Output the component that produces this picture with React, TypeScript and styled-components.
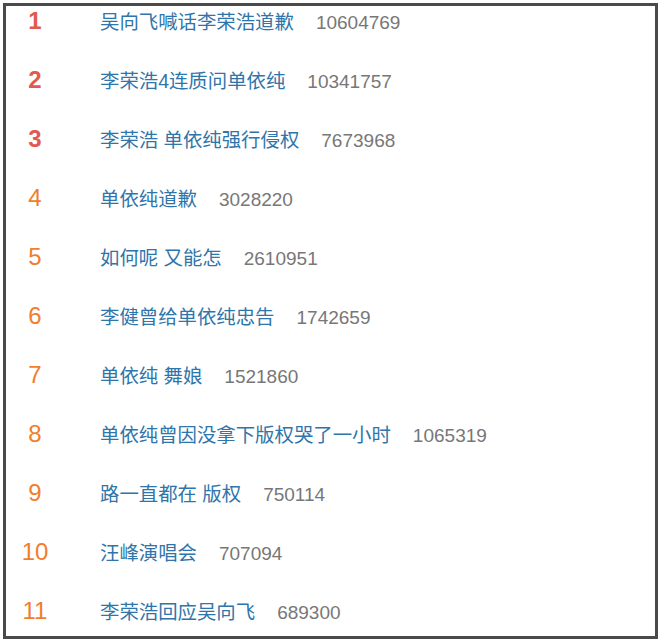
import styled, { createGlobalStyle } from 'styled-components'

const GlobalStyle = createGlobalStyle`
  html, body {
    margin: 0;
    padding: 0;
    background: #fff;
  }
  body {
    font-family: 'Liberation Sans', 'Noto Sans CJK SC', sans-serif;
  }
`

const Frame = styled.div`
  margin: 3px 0 0 3px;
  width: 655px;
  height: 636px;
  box-sizing: border-box;
  border: 3px solid #4a4a4a;
  background: #fff;
  overflow: hidden;
`

const List = styled.ol`
  list-style: none;
  margin: -15px 0 0;
  padding: 0;
`

const Row = styled.li`
  height: 59px;
  display: grid;
  grid-template-columns: 58px 1fr;
  align-content: center;
  align-items: baseline;
`

const Rank = styled.span<{ $top: boolean }>`
  text-align: center;
  font-size: 24px;
  font-weight: ${({ $top }) => ($top ? 700 : 400)};
  color: ${({ $top }) => ($top ? '#e2594f' : '#f07e2c')};
`

const Topic = styled.div`
  display: flex;
  align-items: baseline;
  gap: 22px;
  margin-left: 36px;
`

const Title = styled.span`
  font-size: 19.4px;
  color: #2f75aa;
  white-space: pre;
`

const Count = styled.span`
  font-size: 19px;
  color: #777;
`

type Item = {
  title: string
  count: number
}

const items: Item[] = [
  { title: '吴向飞喊话李荣浩道歉', count: 10604769 },
  { title: '李荣浩4连质问单依纯', count: 10341757 },
  { title: '李荣浩 单依纯强行侵权', count: 7673968 },
  { title: '单依纯道歉', count: 3028220 },
  { title: '如何呢 又能怎', count: 2610951 },
  { title: '李健曾给单依纯忠告', count: 1742659 },
  { title: '单依纯 舞娘', count: 1521860 },
  { title: '单依纯曾因没拿下版权哭了一小时', count: 1065319 },
  { title: '路一直都在 版权', count: 750114 },
  { title: '汪峰演唱会', count: 707094 },
  { title: '李荣浩回应吴向飞', count: 689300 },
]

export default function App() {
  return (
    <>
      <GlobalStyle />
      <Frame>
        <List>
          {items.map((item, i) => (
            <Row key={item.title}>
              <Rank $top={i < 3}>{i + 1}</Rank>
              <Topic>
                <Title>{item.title}</Title>
                <Count>{item.count}</Count>
              </Topic>
            </Row>
          ))}
        </List>
      </Frame>
    </>
  )
}
